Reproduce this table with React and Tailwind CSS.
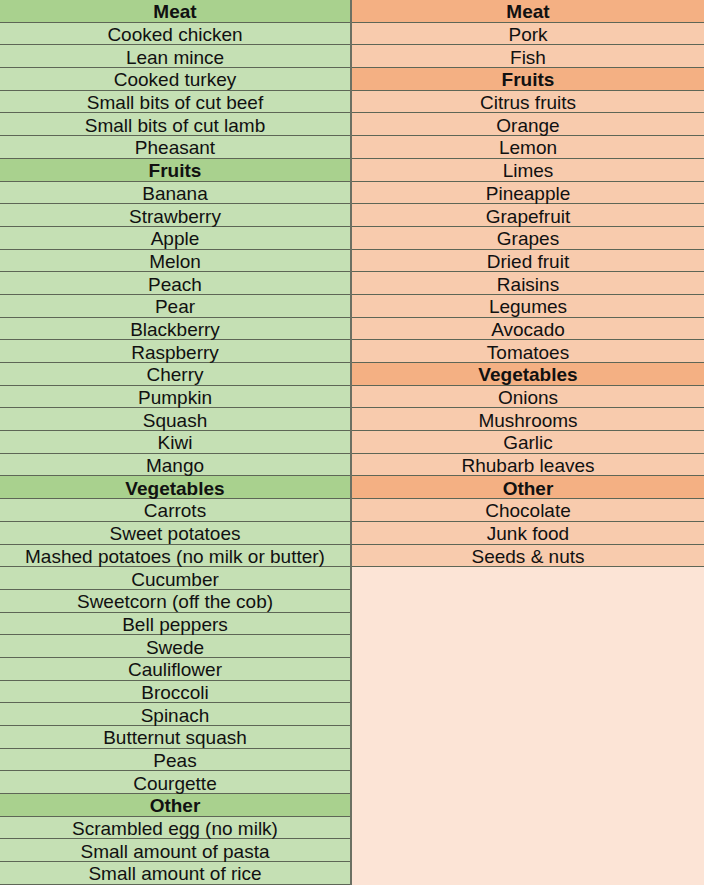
import React from 'react';

const SAFE = [
    { t: 'Meat', h: true }, { t: 'Cooked chicken' }, { t: 'Lean mince' }, { t: 'Cooked turkey' },
    { t: 'Small bits of cut beef' }, { t: 'Small bits of cut lamb' }, { t: 'Pheasant' },
    { t: 'Fruits', h: true }, { t: 'Banana' }, { t: 'Strawberry' }, { t: 'Apple' }, { t: 'Melon' },
    { t: 'Peach' }, { t: 'Pear' }, { t: 'Blackberry' }, { t: 'Raspberry' }, { t: 'Cherry' },
    { t: 'Pumpkin' }, { t: 'Squash' }, { t: 'Kiwi' }, { t: 'Mango' },
    { t: 'Vegetables', h: true }, { t: 'Carrots' }, { t: 'Sweet potatoes' },
    { t: 'Mashed potatoes (no milk or butter)' }, { t: 'Cucumber' }, { t: 'Sweetcorn (off the cob)' },
    { t: 'Bell peppers' }, { t: 'Swede' }, { t: 'Cauliflower' }, { t: 'Broccoli' }, { t: 'Spinach' },
    { t: 'Butternut squash' }, { t: 'Peas' }, { t: 'Courgette' },
    { t: 'Other', h: true }, { t: 'Scrambled egg (no milk)' }, { t: 'Small amount of pasta' },
    { t: 'Small amount of rice' },
];

const AVOID = [
    { t: 'Meat', h: true }, { t: 'Pork' }, { t: 'Fish' },
    { t: 'Fruits', h: true }, { t: 'Citrus fruits' }, { t: 'Orange' }, { t: 'Lemon' }, { t: 'Limes' },
    { t: 'Pineapple' }, { t: 'Grapefruit' }, { t: 'Grapes' }, { t: 'Dried fruit' }, { t: 'Raisins' },
    { t: 'Legumes' }, { t: 'Avocado' }, { t: 'Tomatoes' },
    { t: 'Vegetables', h: true }, { t: 'Onions' }, { t: 'Mushrooms' }, { t: 'Garlic' },
    { t: 'Rhubarb leaves' },
    { t: 'Other', h: true }, { t: 'Chocolate' }, { t: 'Junk food' }, { t: 'Seeds & nuts' },
];

const Row = ({ item, green }) => {
    const bg = green
        ? (item.h ? 'bg-[#a9d18e] font-bold' : 'bg-[#c5e0b4]')
        : (item.h ? 'bg-[#f4b083] font-bold' : 'bg-[#f8cbad]');
    return (
        <div className={`h-[22.69px] shrink-0 flex items-center justify-center border-b border-[#5e6656] text-[19px] leading-none pt-[2px] text-[#111] whitespace-nowrap ${bg}`}>
            {item.t}
        </div>
    );
};

const App = () => (
    <div className="w-[704px] h-[885px] flex overflow-hidden" style={{ fontFamily: '"Liberation Sans", Arial, sans-serif' }}>
        <div className="w-[352px] h-full flex flex-col border-r-2 border-[#6b7063] bg-[#c5e0b4]">
            {SAFE.map((item, i) => <Row key={i} item={item} green />)}
        </div>
        <div className="flex-1 h-full flex flex-col bg-[#fce4d6]">
            {AVOID.map((item, i) => <Row key={i} item={item} />)}
        </div>
    </div>
);

export default App;
